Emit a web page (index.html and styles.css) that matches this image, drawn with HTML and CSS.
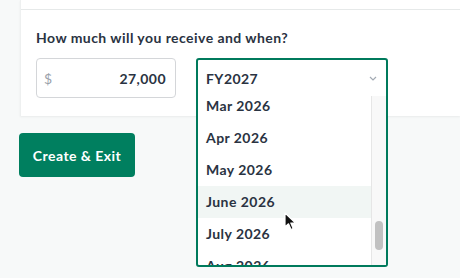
FILE: index.html
```html
<!DOCTYPE html>
<html>
<head>
<meta charset="utf-8">
<link rel="stylesheet" href="styles.css">
</head>
<body>
<div class="card">
  <div class="card-top"></div>
  <div class="section">
    <div class="label">How much will you receive and when?</div>
    <div class="row">
      <div class="amount">
        <span class="currency">$</span>
        <span class="value">27,000</span>
      </div>
      <div class="select">
        <div class="dropdown">
          <div class="select-head">
            <span>FY2027</span>
            <svg class="chev" width="8" height="5" viewBox="0 0 8 5"><path d="M1 1 L4 4 L7 1" fill="none" stroke="#a3aab3" stroke-width="1.2"/></svg>
          </div>
          <div class="list">
            <div class="items">
              <div class="item">Mar 2026</div>
              <div class="item">Apr 2026</div>
              <div class="item">May 2026</div>
              <div class="item hover">June 2026</div>
              <div class="item">July 2026</div>
              <div class="item">Aug 2026</div>
            </div>
            <div class="track"><div class="thumb"></div></div>
          </div>
        </div>
        <svg class="cursor" width="13" height="20" viewBox="0 0 13 20"><path d="M1 1 L1 15 L4.5 11.8 L7 17.5 L9.2 16.5 L6.8 11 L11.5 11 Z" fill="#111" stroke="#fff" stroke-width="1.2" stroke-linejoin="round"/></svg>
      </div>
    </div>
  </div>
</div>
<button class="btn">Create &amp; Exit</button>
</body>
</html>
```

FILE: styles.css
```css
html, body {
  margin: 0;
  padding: 0;
}
body {
  background: #f7f9f9;
  font-family: "Lato", "Noto Sans", sans-serif;
  letter-spacing: 0.45px;
  color: #2a3342;
  width: 460px;
  height: 278px;
  overflow: hidden;
}
.card {
  margin-left: 20px;
  background: #fff;
  box-shadow: 0 1px 2px rgba(0,0,0,0.06);
  border-left: 1px solid #eef0f0;
}
.card-top {
  height: 9px;
  border-bottom: 1px solid #e6e9e9;
}
.section {
  padding: 18px 0 18px 15px;
}
.label {
  font-size: 14px;
  font-weight: 700;
  line-height: 20px;
  margin-bottom: 10px;
}
.row {
  display: flex;
  gap: 20px;
  align-items: flex-start;
}
.amount {
  box-sizing: border-box;
  width: 140px;
  height: 40px;
  border: 1px solid #d4d6d9;
  border-radius: 4px;
  display: flex;
  align-items: center;
  justify-content: space-between;
  padding: 0 9px 0 7px;
}
.currency {
  color: #9aa1aa;
  font-size: 14px;
}
.value {
  font-size: 14px;
  font-weight: 700;
}
.select {
  position: relative;
  width: 192px;
  height: 40px;
}
.dropdown {
  position: absolute;
  top: 0;
  left: 0;
  width: 192px;
  height: 209px;
  box-sizing: border-box;
  border: 2px solid #007a5c;
  border-radius: 3px;
  background: #fff;
  display: flex;
  flex-direction: column;
  z-index: 2;
}
.select-head {
  height: 36px;
  flex: none;
  display: flex;
  align-items: center;
  justify-content: space-between;
  padding: 0 9px 0 8px;
  font-size: 14px;
  font-weight: 700;
}
.chev {
  margin-top: 1px;
}
.list {
  flex: 1;
  display: flex;
  overflow: hidden;
}
.items {
  flex: 1;
  margin-top: -6px;
}
.item {
  height: 32px;
  line-height: 32px;
  padding-left: 8px;
  font-size: 14px;
  font-weight: 700;
}
.item.hover {
  background: #f1f6f4;
}
.track {
  width: 14px;
  flex: none;
  background: #f8f8f8;
  border-left: 1px solid #e6e6e6;
  position: relative;
}
.thumb {
  position: absolute;
  left: 3px;
  top: 125px;
  width: 8px;
  height: 29px;
  border-radius: 4px;
  background: #c1c1c1;
}
.cursor {
  position: absolute;
  left: 88px;
  top: 154px;
  z-index: 3;
}
.btn {
  margin: 17px 0 0 19px;
  width: 116px;
  height: 44px;
  border: none;
  border-radius: 4px;
  background: #007f5f;
  color: #fff;
  font-family: "Lato", "Noto Sans", sans-serif;
  letter-spacing: 0.45px;
  font-size: 14px;
  font-weight: 700;
  display: block;
}
```
